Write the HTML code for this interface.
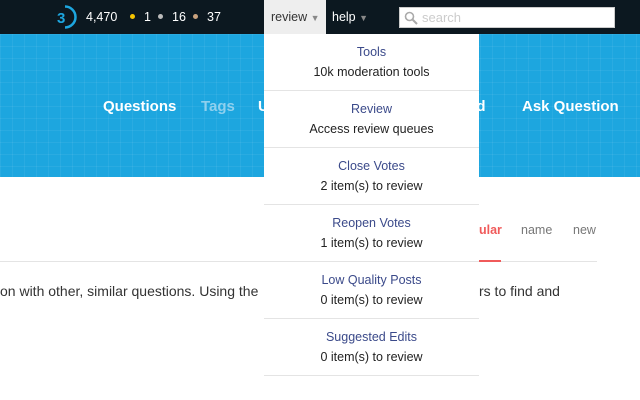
<!DOCTYPE html>
<html><head><style>
*{margin:0;padding:0;box-sizing:border-box}
body{width:640px;height:400px;overflow:hidden;background:#fff;font-family:"Liberation Sans",Arial,sans-serif;position:relative}
.top{position:absolute;left:0;top:0;width:640px;height:34px;background:#0c1820;color:#fff;font-size:12.5px}
.top span{position:absolute;top:10px}
.dot{position:absolute;top:14px;width:5px;height:5px;border-radius:50%}
.rev{position:absolute;left:264px;top:0;width:62px;height:34px;background:#eee;color:#333;font-size:12.5px;padding:10px 0 0 7px}
.help{position:absolute;left:332px;top:10px;color:#fff;font-size:12.5px}
.tri{color:#888;font-size:9px}
.search{position:absolute;left:399px;top:7px;width:216px;height:21px;background:#fff;border:1px solid #ccc;color:#ccc;font-size:13px;padding:2px 0 0 22px}
.banner{position:absolute;left:0;top:34px;width:640px;height:143px;background:#1da6df;
background-image:linear-gradient(rgba(255,255,255,.06) 1px,transparent 1px),linear-gradient(90deg,rgba(255,255,255,.06) 1px,transparent 1px);background-size:12px 12px}
.nav{position:absolute;top:98px;font-size:15px;font-weight:bold;color:#fff}
.dd{position:absolute;left:264px;top:34px;width:215px;background:#fff}
.it{height:57px;border-bottom:1px solid #e4e4e4;text-align:center;font-size:12.5px;padding-top:8px;line-height:20px}
.it b{font-weight:normal;color:#3b4a8a;display:block}
.it i{font-style:normal;color:#222}
</style></head><body>
<div class="top">
<svg style="position:absolute;left:53px;top:5px" width="24" height="24" viewBox="0 0 24 24"><path d="M12 1.5a10.5 10.5 0 0 1 0 21" stroke="#1da6df" stroke-width="2.5" fill="none"/><text x="4" y="18" font-size="15" font-weight="bold" fill="#1da6df" font-family="Liberation Sans">3</text></svg>
<span style="left:86px">4,470</span>
<div class="dot" style="left:130px;background:#f5c400"></div><span style="left:144px">1</span>
<div class="dot" style="left:158px;background:#bbb"></div><span style="left:172px">16</span>
<div class="dot" style="left:193px;background:#c9a27e"></div><span style="left:207px">37</span>
</div>
<div class="banner"></div>
<div class="nav" style="left:103px">Questions</div>
<div class="nav" style="left:201px;color:#8fd0ee">Tags</div>
<div class="nav" style="left:258px">U</div>
<div class="nav" style="left:468px">ed</div>
<div class="nav" style="left:522px">Ask Question</div>
<div class="rev">review <span class="tri">▼</span></div>
<div class="help">help <span class="tri">▼</span></div>
<div class="search"><svg style="position:absolute;left:4px;top:3px" width="14" height="14" viewBox="0 0 14 14"><circle cx="5.5" cy="5.5" r="4" stroke="#aaa" stroke-width="1.6" fill="none"/><path d="M8.5 8.5L13 13" stroke="#aaa" stroke-width="2"/></svg>search</div>
<div style="position:absolute;left:0;top:261px;width:597px;height:1px;background:#e4e4e4"></div>
<div style="position:absolute;left:479px;top:260px;width:22px;height:2px;background:#f05a5a"></div>
<div style="position:absolute;left:479px;top:223px;font-size:12.5px;color:#f05a5a;font-weight:bold">ular</div>
<div style="position:absolute;left:521px;top:223px;font-size:12.5px;color:#777">name</div>
<div style="position:absolute;left:573px;top:223px;font-size:12.5px;color:#777">new</div>
<div style="position:absolute;left:0;top:283px;font-size:14px;color:#333">on with other, similar questions. Using the</div>
<div style="position:absolute;left:479px;top:283px;font-size:14px;color:#333">rs to find and</div>
<div class="dd">
<div class="it"><b>Tools</b><i>10k moderation tools</i></div>
<div class="it"><b>Review</b><i>Access review queues</i></div>
<div class="it"><b>Close Votes</b><i>2 item(s) to review</i></div>
<div class="it"><b>Reopen Votes</b><i>1 item(s) to review</i></div>
<div class="it"><b>Low Quality Posts</b><i>0 item(s) to review</i></div>
<div class="it"><b>Suggested Edits</b><i>0 item(s) to review</i></div>
</div>
</body></html>
